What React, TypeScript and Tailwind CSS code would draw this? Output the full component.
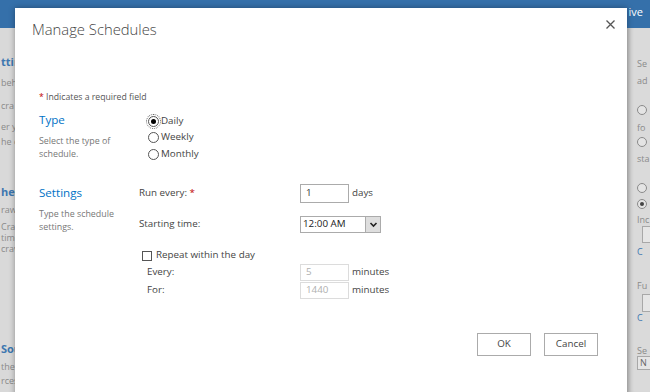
import type { ReactNode } from 'react'

function Radio({ checked = false, focus = false }: { checked?: boolean; focus?: boolean }) {
  return (
    <span
      className={`inline-flex w-[11px] h-[11px] shrink-0 rounded-full border border-[#555] bg-white items-center justify-center ${
        focus ? 'outline-1 outline-dotted outline-[#666] outline-offset-1' : ''
      }`}
    >
      {checked && <span className="w-[5px] h-[5px] rounded-full bg-black" />}
    </span>
  )
}

function RadioRow({ label, checked, focus }: { label: string; checked?: boolean; focus?: boolean }) {
  return (
    <div className="flex items-center h-[16.5px] gap-[2px]">
      <Radio checked={checked} focus={focus} />
      <span>{label}</span>
    </div>
  )
}

function Box({ value, disabled = false, h = 'h-[19px]' }: { value: string; disabled?: boolean; h?: string }) {
  return (
    <div
      className={`w-[49px] ${h} flex items-center pl-[5px] border bg-white ${
        disabled ? 'border-[#dcdcdc] text-[#b0b0b0]' : 'border-[#ababab] text-[#333]'
      }`}
    >
      {value}
    </div>
  )
}

// greyed page that sits behind the dialog
function PageLine({ mt, blue, children }: { mt: string; blue?: boolean; children: ReactNode }) {
  return (
    <div
      className={`${mt} leading-[11px] h-[11px] whitespace-nowrap ${
        blue ? 'text-[#3d77b0] font-bold text-[11px]' : 'text-[#8a8a8a] text-[9px]'
      }`}
    >
      {children}
    </div>
  )
}

function SmallRadio({ mt, checked }: { mt: string; checked?: boolean }) {
  return (
    <div className={`${mt} w-[10px] h-[10px] rounded-full border border-[#8a8a8a] bg-[#e4e4e4] flex items-center justify-center`}>
      {checked && <span className="w-[4px] h-[4px] rounded-full bg-[#444]" />}
    </div>
  )
}

export default function App() {
  return (
    <div className="relative w-[650px] h-[392px] overflow-hidden bg-[#d9d9d9] font-['Open_Sans',sans-serif]">
      {/* background page */}
      <div className="flex flex-col h-full">
        <div className="h-[28px] shrink-0 bg-[#3570aa] flex justify-end items-start pr-[7px] pt-[6px]">
          <span className="text-white text-[11px] leading-[12px]">ive</span>
        </div>
        <div className="flex justify-between flex-1">
          <div className="w-[15px] overflow-hidden pl-[1px]">
            <PageLine mt="mt-[28px]" blue>ttings</PageLine>
            <PageLine mt="mt-[10px]">beh</PageLine>
            <PageLine mt="mt-[12px]">cra</PageLine>
            <PageLine mt="mt-[10px]">er y</PageLine>
            <PageLine mt="mt-[4px]">he o</PageLine>
            <PageLine mt="mt-[39px]" blue>hed</PageLine>
            <PageLine mt="mt-[7px]">rawl</PageLine>
            <PageLine mt="mt-[6px]">Cra</PageLine>
            <PageLine mt="mt-0">time</PageLine>
            <PageLine mt="mt-0">crav</PageLine>
            <PageLine mt="mt-[89px]" blue>Sou</PageLine>
            <PageLine mt="mt-[7px]">the</PageLine>
            <PageLine mt="mt-[3px]">rces</PageLine>
          </div>
          <div className="w-[23px] overflow-hidden pl-[10px] bg-[#dadada] shadow-[inset_6px_0_4px_-3px_rgba(0,0,0,0.12)]">
            <PageLine mt="mt-[30px]">Se</PageLine>
            <PageLine mt="mt-[6px]">ad</PageLine>
            <SmallRadio mt="mt-[19px]" />
            <PageLine mt="mt-[7px]">fo</PageLine>
            <SmallRadio mt="mt-[4px]" />
            <PageLine mt="mt-[6px]">sta</PageLine>
            <SmallRadio mt="mt-[19px]" />
            <SmallRadio mt="mt-[6px]" checked />
            <PageLine mt="mt-[5px]">Inc</PageLine>
            <div className="mt-[1px] ml-[5px] w-[20px] h-[17px] border border-[#a8a8a8] bg-[#e6e6e6]" />
            <PageLine mt="mt-[3px]"><span className="text-[#3d77b0]">C</span></PageLine>
            <PageLine mt="mt-[23px]">Fu</PageLine>
            <div className="mt-[3px] ml-[5px] w-[20px] h-[18px] border border-[#a8a8a8] bg-[#e6e6e6]" />
            <PageLine mt="mt-0"><span className="text-[#3d77b0]">C</span></PageLine>
            <PageLine mt="mt-[22px]">Se</PageLine>
            <div className="w-[20px] h-[14px] border border-[#a8a8a8] bg-[#e6e6e6] text-[9px] leading-[12px] text-[#666] pl-[2px]">N</div>
          </div>
        </div>
      </div>

      {/* dialog */}
      <div className="absolute left-[15px] top-[8px] w-[612px] h-[400px] bg-white shadow-[0_0_6px_rgba(0,0,0,0.35)] text-[9.8px] text-[#444]">
        <div className="flex justify-between items-start pt-[11px] pl-[17px] pr-[12px]">
          <h1 className="text-[14.8px] leading-[20px] text-[#444] font-light">Manage Schedules</h1>
          <svg width="9" height="9" viewBox="0 0 9 9" className="mt-[1px]">
            <path d="M0.5 0.5 L8.5 8.5 M8.5 0.5 L0.5 8.5" stroke="#555" strokeWidth="1.3" fill="none" />
          </svg>
        </div>

        <div className="pl-[24px]">
          <p className="mt-[52px] leading-[12px] text-[8.7px] text-[#555]">
            <span className="text-[#c00000]">*</span> Indicates a required field
          </p>

          {/* Type */}
          <div className="flex mt-[10px]">
            <div className="w-[100px]">
              <h2 className="text-[11.6px] leading-[14px] text-[#0072c6]">Type</h2>
              <p className="mt-[7px] leading-[13px] text-[8.9px] text-[#777] w-[82px]">Select the type of schedule.</p>
            </div>
            <div className="pl-[9px]">
              <RadioRow label="Daily" checked focus />
              <RadioRow label="Weekly" />
              <RadioRow label="Monthly" />
            </div>
          </div>

          {/* Settings */}
          <div className="flex mt-[21px]">
            <div className="w-[100px]">
              <h2 className="mt-[2px] text-[11.6px] leading-[14px] text-[#0072c6]">Settings</h2>
              <p className="mt-[7px] leading-[13px] text-[8.9px] text-[#777] w-[90px]">Type the schedule settings.</p>
            </div>
            <div className="flex flex-col">
              <div className="flex items-center h-[19px]">
                <span className="w-[161px]">
                  Run every: <span className="text-[#c00000]">*</span>
                </span>
                <Box value="1" />
                <span className="ml-[3px]">days</span>
              </div>
              <div className="flex items-center h-[17px] mt-[13px]">
                <span className="w-[161px]">Starting time:</span>
                <div className="w-[81px] h-[17px] flex items-center border border-[#ababab] bg-white">
                  <span className="flex-1 pl-[2px] text-[#222]">12:00 AM</span>
                  <div className="w-[15px] h-[15px] flex items-center justify-center bg-[#dedede] border-l border-[#ababab]">
                    <svg width="9" height="9" viewBox="0 0 9 9">
                      <path d="M1.5 3 L4.5 6 L7.5 3" stroke="#222" strokeWidth="1.6" fill="none" />
                    </svg>
                  </div>
                </div>
              </div>
              <div className="flex items-center h-[14px] mt-[16px] pl-[3px] gap-[4px]">
                <span className="w-[10px] h-[10px] border border-[#555] bg-white" />
                <span>Repeat within the day</span>
              </div>
              <div className="flex items-center h-[17px] mt-[1px]">
                <span className="w-[161px] pl-[8px]">Every:</span>
                <Box value="5" disabled h="h-[17px]" />
                <span className="ml-[3px]">minutes</span>
              </div>
              <div className="flex items-center h-[17px] mt-[1px]">
                <span className="w-[161px] pl-[8px]">For:</span>
                <Box value="1440" disabled h="h-[17px]" />
                <span className="ml-[3px]">minutes</span>
              </div>
            </div>
          </div>
        </div>

        <div className="flex justify-end gap-[13px] pr-[29px] mt-[34px]">
          <button className="w-[54px] h-[23px] border border-[#ababab] bg-white text-[#444]">OK</button>
          <button className="w-[54px] h-[23px] border border-[#ababab] bg-white text-[#444]">Cancel</button>
        </div>
      </div>
    </div>
  )
}
